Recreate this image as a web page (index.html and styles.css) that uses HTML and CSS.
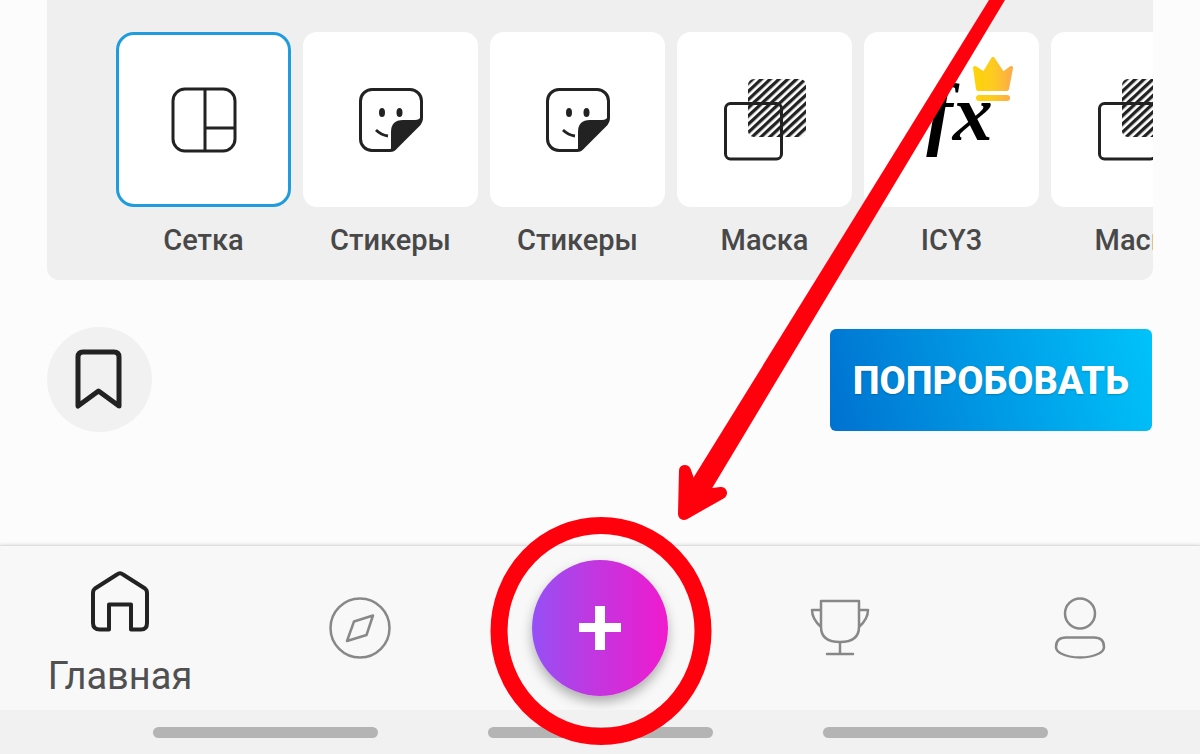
FILE: index.html
```html
<!DOCTYPE html>
<html lang="ru">
<head>
    <meta charset="UTF-8">
    <meta name="viewport" content="width=device-width, initial-scale=1.0">
    <title>Главная</title>
    <link rel="stylesheet" href="styles.css">
</head>
<body>
    <!-- icons used more than once -->
    <svg class="sprite" aria-hidden="true">
        <defs>
            <pattern id="hatch" width="6" height="6" patternUnits="userSpaceOnUse" patternTransform="rotate(-43)">
                <rect width="6" height="3.300" fill="#222"/>
            </pattern>
            <symbol id="icon-sticker" viewBox="0 0 66 66">
                <path d="M32 63.500H14A11.500 11.500 0 0 1 2.500 52V14A11.500 11.500 0 0 1 14 2.500H52A11.500 11.500 0 0 1 63.500 14V31Q63.500 35 60 38.500L38 60.500Q35.500 63.500 32 63.500Z" fill="none" stroke="#222" stroke-width="3"/>
                <path d="M33 63V45Q33 33 45 33H57Q62 33 63 29Q65 35 60 39L38 61Q35 64 31 64Z" fill="#222"/>
                <ellipse cx="24" cy="25.500" rx="3" ry="4.500" fill="#222"/>
                <ellipse cx="41.500" cy="25.500" rx="3" ry="4.500" fill="#222"/>
                <path d="M18 43Q23 48 30 49" fill="none" stroke="#222" stroke-width="2.800"/>
            </symbol>
            <symbol id="icon-mask" viewBox="0 0 82 82">
                <rect x="24" y="0" width="58" height="58" rx="6" fill="url(#hatch)"/>
                <rect x="1.500" y="24.500" width="56" height="55.500" rx="5" fill="none" stroke="#222" stroke-width="3"/>
            </symbol>
        </defs>
    </svg>

    <main class="content">
        <section class="panel">
            <button class="tool selected">
                <span class="tile">
                    <svg width="66" height="66" viewBox="0 0 66 66" fill="none" stroke="#222" stroke-width="3">
                        <rect x="2" y="2" width="62" height="62" rx="12"/>
                        <path d="M34 2V64M34 41H64"/>
                    </svg>
                </span>
                <span class="tool-name">Сетка</span>
            </button>
            <button class="tool">
                <span class="tile"><svg width="66" height="66"><use href="#icon-sticker"/></svg></span>
                <span class="tool-name">Стикеры</span>
            </button>
            <button class="tool">
                <span class="tile"><svg width="66" height="66"><use href="#icon-sticker"/></svg></span>
                <span class="tool-name">Стикеры</span>
            </button>
            <button class="tool">
                <span class="tile"><svg width="82" height="82"><use href="#icon-mask"/></svg></span>
                <span class="tool-name">Маска</span>
            </button>
            <button class="tool">
                <span class="tile">
                    <span class="fx">fx</span>
                    <svg class="crown" width="42" height="44" viewBox="0 0 42 44">
                        <defs>
                            <linearGradient id="gold">
                                <stop offset="0" stop-color="#fdd309"/>
                                <stop offset="0.500" stop-color="#fdcb20"/>
                                <stop offset="1" stop-color="#fdac48"/>
                            </linearGradient>
                        </defs>
                        <path d="M3 11L6 32H35L39 11L31 17L21 2L12 17Z" fill="url(#gold)" stroke="url(#gold)" stroke-width="4" stroke-linejoin="round"/>
                        <rect x="4" y="38" width="34" height="6" rx="3" fill="url(#gold)"/>
                    </svg>
                </span>
                <span class="tool-name">ICY3</span>
            </button>
            <button class="tool">
                <span class="tile"><svg width="82" height="82"><use href="#icon-mask"/></svg></span>
                <span class="tool-name">Маска</span>
            </button>
        </section>

        <div class="actions">
            <button class="bookmark" aria-label="Сохранить">
                <svg width="50" height="62" viewBox="0 0 50 62" fill="none" stroke="#222" stroke-width="5" stroke-linecap="round" stroke-linejoin="round">
                    <path d="M3 57V8Q3 3 8 3H39Q44 3 44 8V57L23.500 42Z"/>
                </svg>
            </button>
            <button class="try-btn">ПОПРОБОВАТЬ</button>
        </div>
    </main>

    <nav class="tabs">
        <a href="#" class="tab active">
            <svg width="60" height="62" viewBox="0 0 60 62" fill="none" stroke="#222" stroke-width="4" stroke-linejoin="round">
                <path d="M27 4.500Q30 2 33 4.500L55 18.500Q57 20 57 23V53Q57 59.500 51 59.500H41V34.500H19V59.500H10Q3 59.500 3 53V23Q3 20 5 18.500Z"/>
            </svg>
            <span>Главная</span>
        </a>
        <a href="#" class="tab" aria-label="Обзор">
            <svg width="62" height="62" viewBox="0 0 62 62" fill="none" stroke="#888" stroke-width="2.500" stroke-linejoin="round">
                <circle cx="31" cy="31" r="29.500"/>
                <path d="M25 24.500L44 18.500L37.500 38L18 44Z"/>
            </svg>
        </a>
        <button class="tab" aria-label="Создать">
            <span class="fab">
                <svg width="42" height="44" viewBox="0 0 42 44" stroke="#fff">
                    <path d="M21 0V44" stroke-width="10"/>
                    <path d="M0 21.500H42" stroke-width="9"/>
                </svg>
            </span>
        </button>
        <a href="#" class="tab" aria-label="Конкурсы">
            <svg width="60" height="58" viewBox="0 0 60 58" fill="none" stroke="#888" stroke-width="2.500" stroke-linejoin="round" stroke-linecap="round">
                <path d="M11 2H49V28Q49 43 30 43Q11 43 11 28ZM11 11H2Q2 20 11 28M49 11H58Q58 20 49 28M30 43V55M17 55H43"/>
            </svg>
        </a>
        <a href="#" class="tab" aria-label="Профиль">
            <svg width="52" height="62" viewBox="0 0 52 62" fill="none" stroke="#888" stroke-width="2.500">
                <circle cx="26" cy="16.500" r="15"/>
                <path d="M12 40.500H40Q50 40.500 50 50Q50 54 45 56.500Q37 60.500 26 60.500Q15 60.500 7 56.500Q2 54 2 50Q2 40.500 12 40.500Z"/>
            </svg>
        </a>
    </nav>

    <footer class="system-bar">
        <span></span>
        <span></span>
        <span></span>
    </footer>

    <!-- red arrow and ring pointing at the plus button -->
    <svg class="pointer" viewBox="0 0 1200 754" preserveAspectRatio="xMidYMax meet" aria-hidden="true">
        <ellipse cx="601" cy="631" rx="102" ry="105.500" fill="none" stroke="#ff000d" stroke-width="17"/>
        <path d="M989 0H1005L711 490L690 500L692 480Z" fill="#ff000d"/>
        <path d="M685 471L684 514L721 493L705 495L690 485Z" fill="#ff000d" stroke="#ff000d" stroke-width="12" stroke-linejoin="round"/>
    </svg>
</body>
</html>
```

FILE: styles.css
```css
* {
    margin: 0;
    padding: 0;
    box-sizing: border-box;
    font-family: Roboto, "Noto Sans", sans-serif;
}

body {
    position: relative;
    display: flex;
    flex-direction: column;
    min-height: 100vh;
    background: #fcfcfc;
    overflow-x: hidden;
}

button {
    border: none;
    background: none;
    cursor: pointer;
}

svg {
    display: block;
}

.sprite {
    position: absolute;
    width: 0;
    height: 0;
}

.content {
    flex: 1;
    padding: 0 48px 0 47px;
}

.panel {
    display: flex;
    gap: 12px;
    margin-right: -1px;
    padding: 32px 0 22px 69px;
    background: #efefef;
    border-radius: 0 0 12px 12px;
    overflow: hidden;
}

.tool {
    flex: none;
    width: 175px;
}

.tile {
    position: relative;
    display: flex;
    align-items: center;
    justify-content: center;
    height: 175px;
    background: #fff;
    border-radius: 14px;
}

.selected .tile {
    border: 3px solid #1f9cde;
    border-radius: 18px;
}

.tool-name {
    display: block;
    margin-top: 16px;
    font-size: 29px;
    font-weight: 500;
    line-height: 35px;
    color: #484848;
}

.fx {
    padding: 0 0 14px 16px;
    font-family: "Liberation Serif", serif;
    font-size: 80px;
    font-style: italic;
    font-weight: bold;
    line-height: 92px;
    color: #000;
}

.crown {
    position: absolute;
    top: 25px;
    right: 25px;
}

.actions {
    display: flex;
    align-items: center;
    justify-content: space-between;
    margin-top: 47px;
}

.bookmark {
    display: flex;
    align-items: center;
    justify-content: center;
    width: 105px;
    height: 105px;
    border-radius: 50%;
    background: #f1f1f1;
}

.try-btn {
    padding: 29px 23px 27px;
    border-radius: 6px;
    background: linear-gradient(75deg, #0072d0, #00c3fa);
    color: #fff;
    font-size: 38px;
    font-weight: 800;
    line-height: 46px;
    text-shadow: 0 1px 2px rgba(0, 0, 0, 0.2);
}

.tabs {
    display: grid;
    grid-template-columns: repeat(5, 1fr);
    height: 165px;
    background: #f8f8f8;
    border-top: 1px solid #dedede;
    box-shadow: 0 -1px 3px rgba(0, 0, 0, 0.1);
}

.tab {
    display: flex;
    flex-direction: column;
    align-items: center;
    justify-content: center;
    color: #505050;
    font-size: 38px;
    line-height: 44px;
    text-decoration: none;
}

.tab.active {
    gap: 22px;
    padding-top: 12px;
}

.fab {
    display: flex;
    align-items: center;
    justify-content: center;
    width: 136px;
    height: 136px;
    border-radius: 50%;
    background: linear-gradient(90deg, #9450f5, #bd3ae2 40%, #f01ace);
    box-shadow: 0 6px 12px rgba(0, 0, 0, 0.3);
}

.system-bar {
    display: flex;
    align-items: center;
    justify-content: center;
    gap: 110px;
    height: 44px;
    background: #f1f1f1;
}

.system-bar span {
    width: 225px;
    height: 11px;
    border-radius: 6px;
    background: #b4b4b4;
}

.pointer {
    position: absolute;
    top: 0;
    left: 0;
    width: 100%;
    height: 100%;
    pointer-events: none;
}
```
